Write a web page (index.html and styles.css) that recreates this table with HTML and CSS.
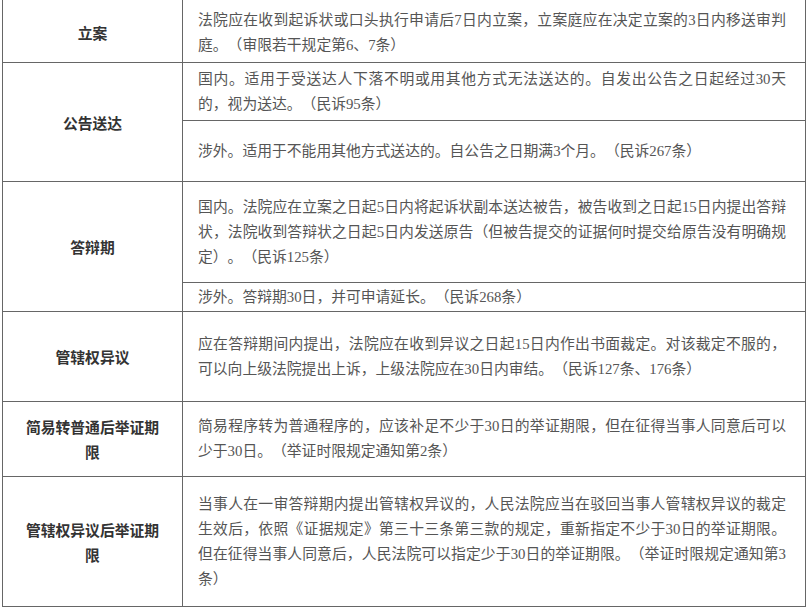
FILE: index.html
```html
<!DOCTYPE html>
<html lang="zh-CN">
<head>
<meta charset="utf-8">
<title>诉讼期限</title>
<link rel="stylesheet" href="styles.css">
</head>
<body>
<div class="sheet">
  <div class="label first">立案</div>
  <div class="text first"><p>法院应在收到起诉状或口头执行申请后7日内立案，立案庭应在决定立案的3日内移送审判庭。（审限若干规定第6、7条）</p></div>

  <div class="label span2">公告送达</div>
  <div class="text"><p>国内。适用于受送达人下落不明或用其他方式无法送达的。自发出公告之日起经过30天的，视为送达。（民诉95条）</p></div>
  <div class="text"><p>涉外。适用于不能用其他方式送达的。自公告之日期满3个月。（民诉267条）</p></div>

  <div class="label span2">答辩期</div>
  <div class="text"><p>国内。法院应在立案之日起5日内将起诉状副本送达被告，被告收到之日起15日内提出答辩状，法院收到答辩状之日起5日内发送原告（但被告提交的证据何时提交给原告没有明确规定）。（民诉125条）</p></div>
  <div class="text"><p>涉外。答辩期30日，并可申请延长。（民诉268条）</p></div>

  <div class="label">管辖权异议</div>
  <div class="text"><p>应在答辩期间内提出，法院应在收到异议之日起15日内作出书面裁定。对该裁定不服的，可以向上级法院提出上诉，上级法院应在30日内审结。（民诉127条、176条）</p></div>

  <div class="label">简易转普通后举证期限</div>
  <div class="text"><p>简易程序转为普通程序的，应该补足不少于30日的举证期限，但在征得当事人同意后可以少于30日。（举证时限规定通知第2条）</p></div>

  <div class="label">管辖权异议后举证期限</div>
  <div class="text"><p>当事人在一审答辩期内提出管辖权异议的，人民法院应当在驳回当事人管辖权异议的裁定生效后，依照《证据规定》第三十三条第三款的规定，重新指定不少于30日的举证期限。但在征得当事人同意后，人民法院可以指定少于30日的举证期限。（举证时限规定通知第3条）</p></div>
</div>
</body>
</html>
```
FILE: styles.css
```css
html, body {
  margin: 0;
  padding: 0;
  background: #ffffff;
}

body {
  overflow: hidden;
}

.sheet {
  display: grid;
  grid-template-columns: 179px 622px;
  grid-template-rows: 62px 57px 60px 100px 28px 89px 74px 129px;
  gap: 1px;
  padding: 1px;
  margin: -1px 0 0 2px;
  width: max-content;
  background: #666666;
}

.label,
.text {
  background: #ffffff;
  display: flex;
  align-items: center;
  line-height: 25px;
  font-size: 14.8px;
}

.label {
  grid-column: 1;
  justify-content: center;
  text-align: center;
  padding: 0 20px;
  font-family: "Noto Sans CJK SC", sans-serif;
  font-weight: bold;
  color: #333333;
}

.span2 {
  grid-row: span 2;
}

.text {
  grid-column: 2;
  padding: 0 19px 0 15px;
  font-family: "Liberation Serif", "Noto Sans CJK SC", serif;
  color: #555555;
}

.text p {
  margin: 0;
  width: 100%;
  text-align: justify;
  text-spacing-trim: space-all;
}

.first {
  padding-top: 3px;
}
```
